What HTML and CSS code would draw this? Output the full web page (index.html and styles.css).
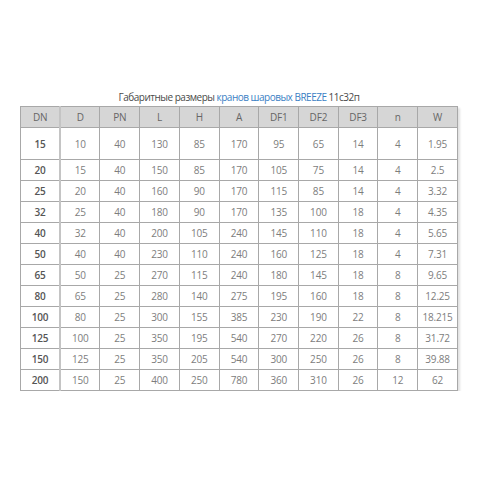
FILE: index.html
```html
<!DOCTYPE html>
<html lang="ru">
<head>
<meta charset="utf-8">
<link rel="stylesheet" href="styles.css">
</head>
<body>
<div class="wrap">
  <div class="title">Габаритные размеры <span class="hl">кранов шаровых BREEZE</span> 11с32п</div>
  <table class="spec">
    <thead>
      <tr><th>DN</th><th>D</th><th>PN</th><th>L</th><th>H</th><th>A</th><th>DF1</th><th>DF2</th><th>DF3</th><th>n</th><th>W</th></tr>
    </thead>
    <tbody>
      <tr class="first"><td>15</td><td>10</td><td>40</td><td>130</td><td>85</td><td>170</td><td>95</td><td>65</td><td>14</td><td>4</td><td>1.95</td></tr>
      <tr><td>20</td><td>15</td><td>40</td><td>150</td><td>85</td><td>170</td><td>105</td><td>75</td><td>14</td><td>4</td><td>2.5</td></tr>
      <tr><td>25</td><td>20</td><td>40</td><td>160</td><td>90</td><td>170</td><td>115</td><td>85</td><td>14</td><td>4</td><td>3.32</td></tr>
      <tr><td>32</td><td>25</td><td>40</td><td>180</td><td>90</td><td>170</td><td>135</td><td>100</td><td>18</td><td>4</td><td>4.35</td></tr>
      <tr><td>40</td><td>32</td><td>40</td><td>200</td><td>105</td><td>240</td><td>145</td><td>110</td><td>18</td><td>4</td><td>5.65</td></tr>
      <tr><td>50</td><td>40</td><td>40</td><td>230</td><td>110</td><td>240</td><td>160</td><td>125</td><td>18</td><td>4</td><td>7.31</td></tr>
      <tr><td>65</td><td>50</td><td>25</td><td>270</td><td>115</td><td>240</td><td>180</td><td>145</td><td>18</td><td>8</td><td>9.65</td></tr>
      <tr><td>80</td><td>65</td><td>25</td><td>280</td><td>140</td><td>275</td><td>195</td><td>160</td><td>18</td><td>8</td><td>12.25</td></tr>
      <tr><td>100</td><td>80</td><td>25</td><td>300</td><td>155</td><td>385</td><td>230</td><td>190</td><td>22</td><td>8</td><td>18.215</td></tr>
      <tr><td>125</td><td>100</td><td>25</td><td>350</td><td>195</td><td>540</td><td>270</td><td>220</td><td>26</td><td>8</td><td>31.72</td></tr>
      <tr><td>150</td><td>125</td><td>25</td><td>350</td><td>205</td><td>540</td><td>300</td><td>250</td><td>26</td><td>8</td><td>39.88</td></tr>
      <tr><td>200</td><td>150</td><td>25</td><td>400</td><td>250</td><td>780</td><td>360</td><td>310</td><td>26</td><td>12</td><td>62</td></tr>
    </tbody>
  </table>
</div>
</body>
</html>
```
FILE: styles.css
```css
html, body {
  margin: 0;
  padding: 0;
  background: #ffffff;
}
.wrap {
  padding: 90px 0 0 20px;
  width: 438px;
  font-family: "Open Sans", "Noto Sans", sans-serif;
}
.title {
  text-align: center;
  font-size: 10px;
  line-height: 14px;
  letter-spacing: -0.5px;
  color: #4a4a4a;
  margin-bottom: 2px;
}
.title .hl {
  color: #3b7fc4;
}
.spec {
  width: 438px;
  table-layout: fixed;
  border-collapse: collapse;
  font-size: 10px;
  letter-spacing: -0.2px;
  color: #7d7d7d;
  box-shadow: 2px 2px 2px rgba(0, 0, 0, 0.12);
}
.spec th,
.spec td {
  border: 1px solid #a8a8a8;
  text-align: center;
  padding: 0;
  font-weight: 400;
}
.spec thead tr {
  height: 21px;
}
.spec th {
  background: #d6d6d6;
  color: #666666;
}
.spec tbody tr {
  height: 21px;
}
.spec tbody tr.first {
  height: 32px;
}
.spec td:first-child {
  font-weight: 600;
  color: #555555;
}
.spec th:first-child,
.spec td:first-child {
  border-right: 2px solid #c4c4c4;
}
```
